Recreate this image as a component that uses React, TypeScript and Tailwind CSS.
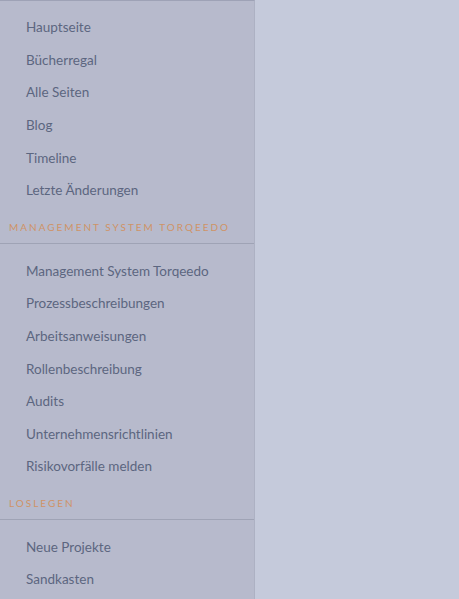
const general = ['Hauptseite', 'Bücherregal', 'Alle Seiten', 'Blog', 'Timeline', 'Letzte Änderungen'];

const sections = [
  {
    title: 'Management System Torqeedo',
    items: [
      'Management System Torqeedo',
      'Prozessbeschreibungen',
      'Arbeitsanweisungen',
      'Rollenbeschreibung',
      'Audits',
      'Unternehmensrichtlinien',
      'Risikovorfälle melden',
    ],
  },
  {
    title: 'Loslegen',
    items: ['Neue Projekte', 'Sandkasten'],
  },
];

function NavItem({ label }: { label: string }) {
  return (
    <a href="#" className="flex h-[32.6px] items-center pl-[26px] text-[13.5px] text-[#5c6680] hover:text-[#3f475e]">
      {label}
    </a>
  );
}

export default function App() {
  return (
    <div className="flex min-h-[599px] bg-[#c5cadb] font-['Lato','Liberation_Sans',sans-serif]">
      <nav className="w-[255px] shrink-0 border-t border-r border-t-[#9ea2b6] border-r-[#adb1c3] bg-[#b7bacc]">
        <div className="pt-[10px]">
          {general.map((item) => (
            <NavItem key={item} label={item} />
          ))}
        </div>

        {sections.map((section) => (
          <div key={section.title}>
            <div className="border-b border-[#9fa3b5] pt-[12px] pb-[8px] pl-[9px] text-[10px] leading-[16px] tracking-[0.2em] text-[#cf9366] uppercase">
              {section.title}
            </div>
            <div className="pt-[11px]">
              {section.items.map((item) => (
                <NavItem key={item} label={item} />
              ))}
            </div>
          </div>
        ))}
      </nav>
      <main className="flex-1" />
    </div>
  );
}
